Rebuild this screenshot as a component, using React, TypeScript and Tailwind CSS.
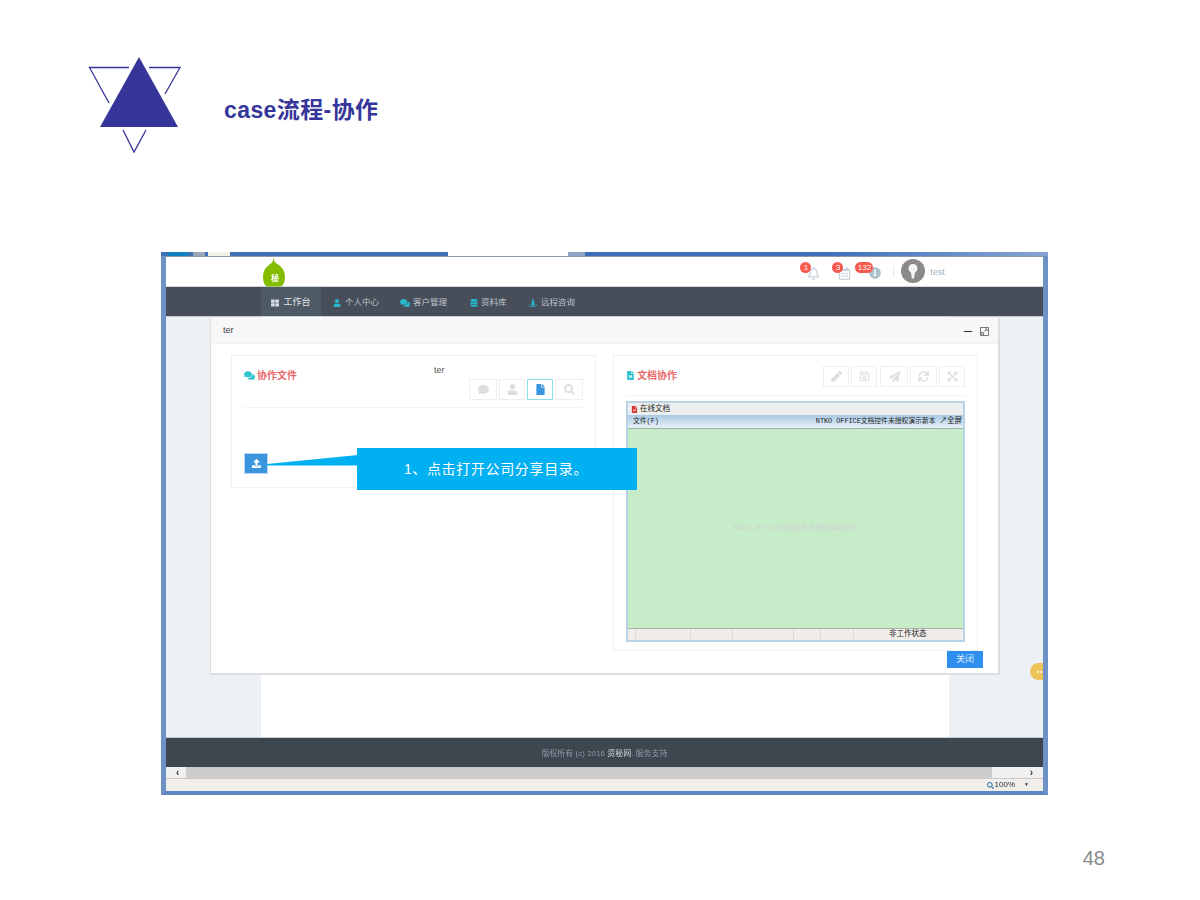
import React from 'react';
import {
  FaComment,
  FaComments,
  FaDatabase,
  FaExpandArrowsAlt,
  FaFile,
  FaFileAlt,
  FaInfoCircle,
  FaPaperPlane,
  FaPen,
  FaRegBell,
  FaRegCalendarAlt,
  FaRegSave,
  FaSearch,
  FaStreetView,
  FaSync,
  FaThLarge,
  FaUpload,
  FaUser,
} from 'react-icons/fa';

const navItems = [
  { label: '个人中心', icon: FaUser, width: 'w-[66px]', iconSize: 'size-[8px]', gap: 'gap-[4px]' },
  { label: '客户管理', icon: FaComments, width: 'w-[69px]', iconSize: 'size-[10px]', gap: 'gap-[3px]' },
  { label: '资料库', icon: FaDatabase, width: 'w-[58px]', iconSize: 'size-[8px]', gap: 'gap-[3px]' },
  { label: '远程咨询', icon: FaStreetView, width: 'w-[70px]', iconSize: 'size-[8px]', gap: 'gap-[4px]' },
];

function SlideLogo() {
  return (
    <svg width="94" height="98" viewBox="0 0 94 98" className="shrink-0">
      <path d="M41 11.500H1.500L21 47" fill="none" stroke="#35359a" strokeWidth="1.300" />
      <path d="M61 11.500H92L77 38" fill="none" stroke="#35359a" strokeWidth="1.300" />
      <path d="M35 74L46 96L58 74" fill="none" stroke="#35359a" strokeWidth="1.300" />
      <path d="M51 1L90 71H12Z" fill="#35359a" />
    </svg>
  );
}

function Leaf() {
  return (
    <svg width="24" height="30" viewBox="0 0 24 30" className="absolute left-[96px] top-0">
      <path
        d="M11.500 0C11.700 3 12.200 5 14.500 6.500C19 9 23 13 23 20C23 25 21 29.500 18 29.500H6C3 29.500 1 25 1 20C1 13 5 9 9 6.500C11 5 11.300 3 11.500 0Z"
        fill="#83bd00"
      />
      <text x="13" y="24" textAnchor="middle" fontSize="8" fontWeight="700" fill="#fff" fontFamily="'Noto Sans CJK SC', serif">秘</text>
    </svg>
  );
}

function Badge({ text, className }: { text: string; className: string }) {
  return (
    <span className={`absolute flex h-[11px] items-center justify-center rounded-full bg-[#f7594f] text-[8px] leading-none text-white ${className}`}>
      {text}
    </span>
  );
}

function TopBar() {
  return (
    <div className="relative flex h-[30px] items-center justify-end border-t border-[#8c99aa] bg-white pr-[98px]">
      <Leaf />
      <div className="relative mr-[12px] flex h-[29px] w-[86px] items-center justify-end gap-[18px] text-[#c9d2da]">
        <FaRegBell className="mt-[3px] size-[13px]" />
        <FaRegCalendarAlt className="mt-[3px] size-[13px]" />
        <FaInfoCircle className="mt-[3px] size-[12px] text-[#aebfcc]" />
        <Badge text="1" className="left-[5px] top-[5px] w-[11px]" />
        <Badge text="3" className="left-[37px] top-[5px] w-[11px]" />
        <Badge text="132" className="left-[60px] top-[5px] w-[18px]" />
      </div>
      <span className="mr-[7px] h-[11px] w-px bg-[#e4e7ea]" />
      <div className="mb-[1px] mr-[5px] flex size-[24px] items-center justify-center rounded-full bg-[#8a8a8a]">
        <svg width="10" height="15" viewBox="0 0 10 15">
          <path d="M5 0C7.800 0 9.500 2 9.500 4.500C9.500 6.500 8.300 7.800 7 8.500L6 14.500H3.800L3 8.500C1.700 7.800 0.500 6.500 0.500 4.500C0.500 2 2.200 0 5 0Z" fill="#f4f4f4" />
        </svg>
      </div>
      <span className="mt-[3px] text-[9px] text-[#9fb0bd]">test</span>
    </div>
  );
}

function NavBar() {
  return (
    <div className="flex h-[31px] items-center border-y border-t-[#d0d3d6] border-b-[#c8ccd0] bg-[#474e59] pl-[95px]">
      <div className="flex h-full w-[60px] items-center justify-center gap-[4px] bg-[#4e5a65] pt-[2px] text-[9px] text-[#e2e5e8]">
        <FaThLarge className="size-[8px] text-[#d5dae0]" />
        工作台
      </div>
      <div className="flex items-center gap-[1px] pl-[12px] pt-[2px]">
        {navItems.map((item) => (
          <div key={item.label} className={`flex items-center text-[8.5px] text-[#bfc5cc] ${item.gap} ${item.width}`}>
            <item.icon className={`text-[#27b6cb] ${item.iconSize}`} />
            {item.label}
          </div>
        ))}
      </div>
    </div>
  );
}

function ToolButton({ icon: Icon, active, className }: { icon: React.ElementType; active?: boolean; className: string }) {
  return (
    <div className={`flex h-[21px] items-center justify-center border ${active ? 'border-[#8fe0ec]' : 'border-[#eeeff1]'} ${className}`}>
      <Icon className={`size-[11px] ${active ? 'text-[#3a94de]' : 'text-[#dcdee0]'}`} />
    </div>
  );
}

function LeftPanel() {
  return (
    <div className="relative h-[133px] w-[365px] border border-[#f0f1f3] px-[12px]">
      <div className="flex h-[52px] items-start justify-between border-b border-[#f3f4f5]">
        <div className="mt-[12px] flex items-center gap-[2px] text-[10px] font-bold text-[#e8686a]">
          <FaComments className="size-[11px] text-[#2fc2cf]" />
          协作文件
        </div>
        <div className="mt-[23px] flex items-center gap-[2px]">
          <ToolButton icon={FaComment} className="w-[28px]" />
          <ToolButton icon={FaUser} className="w-[26px]" />
          <ToolButton icon={FaFile} active className="w-[26px]" />
          <ToolButton icon={FaSearch} className="w-[28px]" />
        </div>
      </div>
      <span className="absolute left-[202px] top-[8px] text-[9px] text-[#555]">ter</span>
      <div className="mt-[45px] flex h-[21px] w-[24px] items-center justify-center border border-[#b8d6f2] bg-[#3a94de]">
        <FaUpload className="size-[9px] text-white" />
      </div>
    </div>
  );
}

function DocViewer() {
  const cells = ['w-[8px]', 'w-[55px]', 'w-[42px]', 'w-[61px]', 'w-[27px]', 'w-[33px]'];
  return (
    <div className="mt-[5px] flex h-[241px] flex-col border-2 border-[#b9d3e7]">
      <div className="flex h-[12px] items-center gap-[2px] bg-[#eeeeee] pl-[3px] text-[7.5px] text-[#222]">
        <FaFileAlt className="size-[7px] text-[#d8322d]" />
        在线文档
      </div>
      <div className="flex h-[14px] items-center justify-between border-b border-[#9db2a6] bg-gradient-to-b from-[#a8c8e4] to-[#eaf2f8] pl-[5px] pr-[1px] font-['Liberation_Mono','Noto_Sans_CJK_SC',monospace] text-[6.8px] text-[#222]">
        <span>文件(F)</span>
        <span className="flex gap-[4px]">
          <span>NTKO OFFICE文档控件未授权演示新本</span>
          <span className="text-[7.5px]">↗全屏</span>
        </span>
      </div>
      <div className="flex flex-1 items-center justify-center bg-[#c6ecca] font-['Liberation_Mono','Noto_Sans_CJK_SC',monospace] text-[7px] text-[#cfd3cf]">
        NTKO OFFICE文档控件未授权演示新本
      </div>
      <div className="flex h-[12px] border-t border-[#a5b5a8] bg-[#f0edeb]">
        {cells.map((width, i) => (
          <span key={i} className={`border-r border-[#dcd9d7] ${width}`} />
        ))}
        <span className="pl-[35px] text-[7.5px] leading-[10px] text-[#222]">非工作状态</span>
      </div>
    </div>
  );
}

function RightPanel() {
  return (
    <div className="h-[296px] w-[365px] border border-[#f0f1f3] px-[12px]">
      <div className="flex h-[40px] items-start justify-between border-b border-[#f3f4f5]">
        <div className="mt-[12px] flex items-center gap-[2px] text-[10px] font-bold text-[#e8686a]">
          <FaFileAlt className="size-[9px] text-[#2fc2cf]" />
          文档协作
        </div>
        <div className="mt-[10px] flex items-center gap-[2px]">
          <ToolButton icon={FaPen} className="w-[26px]" />
          <ToolButton icon={FaRegSave} className="w-[26px]" />
          <ToolButton icon={FaPaperPlane} className="ml-[1px] w-[28px]" />
          <ToolButton icon={FaSync} className="w-[27px]" />
          <ToolButton icon={FaExpandArrowsAlt} className="w-[26px]" />
        </div>
      </div>
      <DocViewer />
    </div>
  );
}

function Modal() {
  return (
    <div className="absolute left-[44px] top-[1px] h-[357px] w-[790px] border-r-2 border-b-2 border-l border-[#dcdedf] bg-white">
      <div className="flex h-[26px] items-center justify-between border-b border-[#f0f0f0] bg-[#f7f7f7] pl-[12px] pr-[9px] pt-[1px] text-[9px] text-[#444]">
        ter
        <div className="flex items-center gap-[8px]">
          <span className="h-[1px] w-[8px] bg-[#333]" />
          <svg width="9" height="9" viewBox="0 0 9 9">
            <path d="M0.500 0.500H8.500V8.500H0.500Z" fill="none" stroke="#777" />
            <path d="M1 5.500H3.500V8H1Z" fill="none" stroke="#777" />
            <path d="M4.500 4.500L7 2M5 2H7V4" fill="none" stroke="#777" />
          </svg>
        </div>
      </div>
      <div className="flex items-start gap-[17px] pl-[20px] pt-[11px]">
        <LeftPanel />
        <RightPanel />
      </div>
      <div className="flex justify-end pr-[15px]">
        <div className="flex h-[17px] w-[36px] items-center justify-center bg-[#2e8ff0] text-[9px] text-[#dcecfb]">关闭</div>
      </div>
    </div>
  );
}

function BrowserWindow() {
  return (
    <div className="mx-[161px] flex h-[543px] w-[887px] flex-col blur-[0.3px]">
      <div className="flex h-[4px] shrink-0">
        <span className="w-[7px] bg-[#3f6fb5]" />
        <span className="w-[20px] bg-[#1180c0]" />
        <span className="w-[5px] bg-[#3f6fb5]" />
        <span className="w-[12px] bg-[#9aa6b8]" />
        <span className="w-[3px] bg-[#3f6fb5]" />
        <span className="w-[22px] bg-[#f4f2e6]" />
        <span className="w-[218px] bg-[#3f6fb5]" />
        <span className="w-[120px] bg-white" />
        <span className="w-[17px] bg-[#8ea4c6]" />
        <span className="flex-1 bg-gradient-to-r from-[#3c6db8] via-[#3c6db8] to-[#86a4d2]" />
      </div>
      <div className="flex flex-1 flex-col border-x-[5px] border-b-[4px] border-x-[#6f92c6] border-b-[#5f86c0]">
        <TopBar />
        <NavBar />
        <div className="relative flex h-[421px] justify-center border-b border-[#c8ccd0] bg-[#edf0f5]">
          <div className="h-full w-[688px] bg-white" />
          <Modal />
          <span className="absolute left-[864px] top-[346px] flex h-[17px] w-[13px] items-center justify-end gap-[1px] rounded-l-full bg-[#eec35a] pr-[1px]">
            <span className="size-[2px] rounded-full bg-white" />
            <span className="size-[2px] rounded-full bg-white" />
          </span>
        </div>
        <div className="flex h-[29px] items-center justify-center bg-[#3e4650] pt-[3px] text-[8px] text-[#8e98a3]">
          版权所有 (c) 2016&nbsp;<span className="text-[#d4d8dc]">资秘网</span>. 服务支持
        </div>
        <div className="flex h-[11px] items-center justify-between bg-[#f0f0f0] text-[10px] leading-none text-[#333]">
          <span className="w-[20px] pl-[10px] font-bold">‹</span>
          <span className="h-full flex-1 bg-[#cdcdcd]" />
          <span className="flex w-[51px] justify-end pr-[10px] font-bold">›</span>
        </div>
        <div className="flex h-[13px] items-center justify-end border-t border-[#c9c9c9] bg-[#f0edeb] pr-[14px] text-[8px] text-[#333]">
          <FaSearch className="mr-[1px] size-[7px] text-[#3f7fb5]" />
          100%
          <span className="ml-[9px] text-[5px]">▼</span>
        </div>
      </div>
    </div>
  );
}

export default function App() {
  return (
    <div className="relative h-[900px] w-[1200px] overflow-hidden bg-white font-['Liberation_Sans','Noto_Sans_CJK_SC',sans-serif]">
      <div className="flex h-[252px] items-start pl-[88px] pt-[56px]">
        <SlideLogo />
        <h1 className="ml-[42px] mt-[39px] text-[23px] font-bold leading-[30px] tracking-[0.4px] text-[#35359a]">case流程-协作</h1>
      </div>
      <BrowserWindow />
      <div className="mt-[51px] pr-[95px] text-right text-[20px] leading-[24px] text-[#8a8a8a]">48</div>

      {/* callout over the screenshot */}
      <svg width="91" height="11" viewBox="0 0 91 11" className="absolute left-[267px] top-[455px]">
        <path d="M0 9L91 0V10.500H0Z" fill="#00b0f0" />
      </svg>
      <div className="absolute left-[357px] top-[448px] flex h-[42px] w-[280px] items-center justify-center bg-[#00b0f0] pr-[2px] text-[14px] tracking-[0.65px] text-white">
        1、点击打开公司分享目录。
      </div>
    </div>
  );
}
